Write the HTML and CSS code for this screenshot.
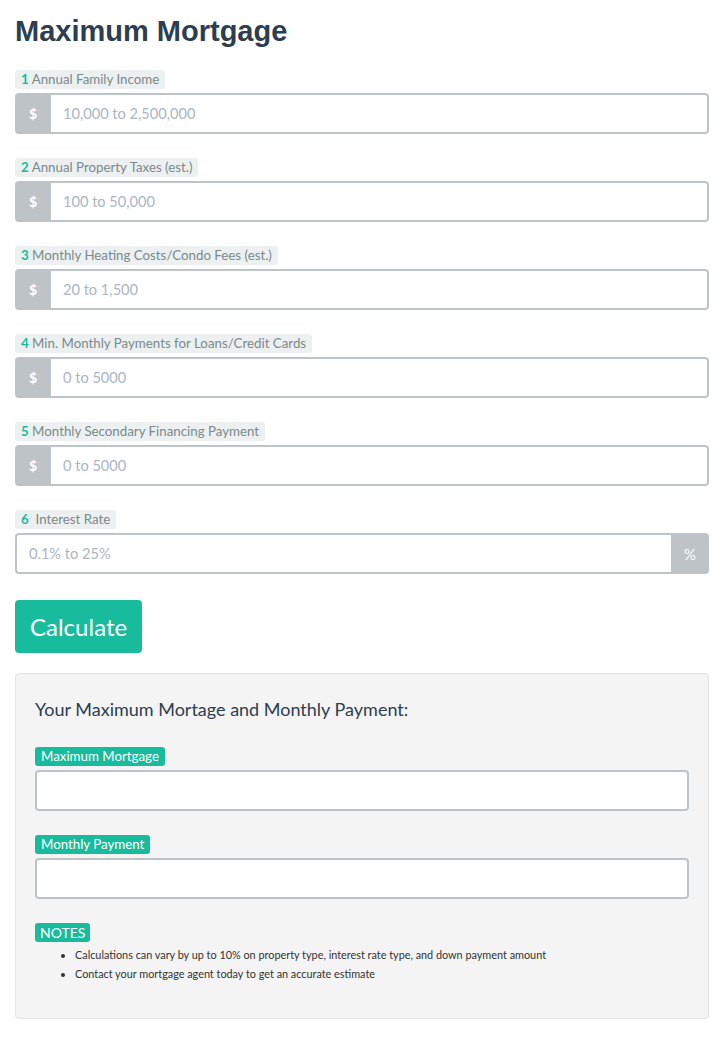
FILE: index.html
```html
<!DOCTYPE html>
<html lang="en">
<head>
  <meta charset="UTF-8">
  <title>Maximum Mortgage</title>
  <link rel="stylesheet" href="styles.css">
</head>
<body>
  <div class="calc">
    <h1>Maximum Mortgage</h1>

    <div class="field">
      <span class="step"><b>1</b> Annual Family Income</span>
      <div class="group">
        <span class="addon">$</span>
        <input type="text" placeholder="10,000 to 2,500,000">
      </div>
    </div>

    <div class="field">
      <span class="step"><b>2</b> Annual Property Taxes (est.)</span>
      <div class="group">
        <span class="addon">$</span>
        <input type="text" placeholder="100 to 50,000">
      </div>
    </div>

    <div class="field">
      <span class="step"><b>3</b> Monthly Heating Costs/Condo Fees (est.)</span>
      <div class="group">
        <span class="addon">$</span>
        <input type="text" placeholder="20 to 1,500">
      </div>
    </div>

    <div class="field">
      <span class="step"><b>4</b> Min. Monthly Payments for Loans/Credit Cards</span>
      <div class="group">
        <span class="addon">$</span>
        <input type="text" placeholder="0 to 5000">
      </div>
    </div>

    <div class="field">
      <span class="step"><b>5</b> Monthly Secondary Financing Payment</span>
      <div class="group">
        <span class="addon">$</span>
        <input type="text" placeholder="0 to 5000">
      </div>
    </div>

    <div class="field">
      <span class="step"><b>6</b>&nbsp; Interest Rate</span>
      <div class="group right">
        <input type="text" placeholder="0.1% to 25%">
        <span class="addon">%</span>
      </div>
    </div>

    <button class="btn">Calculate</button>

    <div class="result">
      <h4>Your Maximum Mortage and Monthly Payment:</h4>

      <div class="field">
        <span class="tag">Maximum Mortgage</span>
        <input type="text" class="out">
      </div>

      <div class="field">
        <span class="tag">Monthly Payment</span>
        <input type="text" class="out">
      </div>

      <div class="field notes-box">
        <span class="tag notes">NOTES</span>
        <ul>
          <li>Calculations can vary by up to 10% on property type, interest rate type, and down payment amount</li>
          <li>Contact your mortgage agent today to get an accurate estimate</li>
        </ul>
      </div>
    </div>
  </div>
</body>
</html>
```

FILE: styles.css
```css
body {
  margin: 0;
  font-family: Lato, "Open Sans", sans-serif;
  color: #2c3e50;
  background: #fff;
}
.calc {
  padding: 0 15px;
}
h1 {
  font-family: "Liberation Sans", Arial, sans-serif;
  font-size: 29px;
  font-weight: bold;
  line-height: 34px;
  margin: 14px 0 22px;
  color: #2c3e50;
}
.field {
  display: flex;
  flex-direction: column;
  align-items: flex-start;
  margin-bottom: 24px;
}
.step, .tag {
  font-size: 13.3px;
  line-height: 19px;
  padding: 0 6px;
  border-radius: 3px;
  margin-bottom: 4px;
}
.step {
  background: #ecf0f1;
  color: #7b8a8b;
}
.step b {
  color: #18bc9c;
}
.tag {
  background: #18bc9c;
  color: #fff;
}
.group {
  display: flex;
  align-self: stretch;
  height: 41px;
}
.addon {
  flex: 0 0 36px;
  display: flex;
  align-items: center;
  justify-content: center;
  background: #bdc3c7;
  color: #fff;
  font-size: 14px;
  font-weight: bold;
  border-radius: 4px 0 0 4px;
}
.group input {
  flex: 1;
  min-width: 0;
  border: 2px solid #bdc3c7;
  border-left: 0;
  border-radius: 0 4px 4px 0;
  padding: 0 12px;
  font: 14.6px Lato, sans-serif;
  color: #2c3e50;
  outline: none;
}
.group.right .addon {
  flex-basis: 38px;
  border-radius: 0 4px 4px 0;
  font-size: 15px;
  font-weight: normal;
}
.group.right input {
  border: 2px solid #bdc3c7;
  border-right: 0;
  border-radius: 4px 0 0 4px;
}
input::placeholder {
  color: #acb6c0;
}
.btn {
  display: block;
  background: #18bc9c;
  color: #fff;
  border: 0;
  border-radius: 4px;
  font: 24px Lato, sans-serif;
  height: 53px;
  padding: 0 15px;
  margin: 26px 0 20px;
}
.result {
  background: #f4f4f4;
  border: 1px solid #e3e3e3;
  border-radius: 4px;
  padding: 22px 19px 20px;
  height: 346px;
  box-sizing: border-box;
}
.result h4 {
  font-size: 18px;
  font-weight: normal;
  line-height: 26px;
  margin: 0 0 25px;
}
.out {
  display: block;
  align-self: stretch;
  box-sizing: border-box;
  height: 41px;
  border: 2px solid #bdc3c7;
  border-radius: 4px;
  background: #fff;
  outline: none;
}
.notes {
  font-size: 14px;
  padding: 0 5px;
  margin-bottom: 0;
}
.result ul {
  margin: 3px 0 0;
  padding-left: 40px;
  font-size: 10.85px;
  line-height: 19px;
  color: #333;
}
```
